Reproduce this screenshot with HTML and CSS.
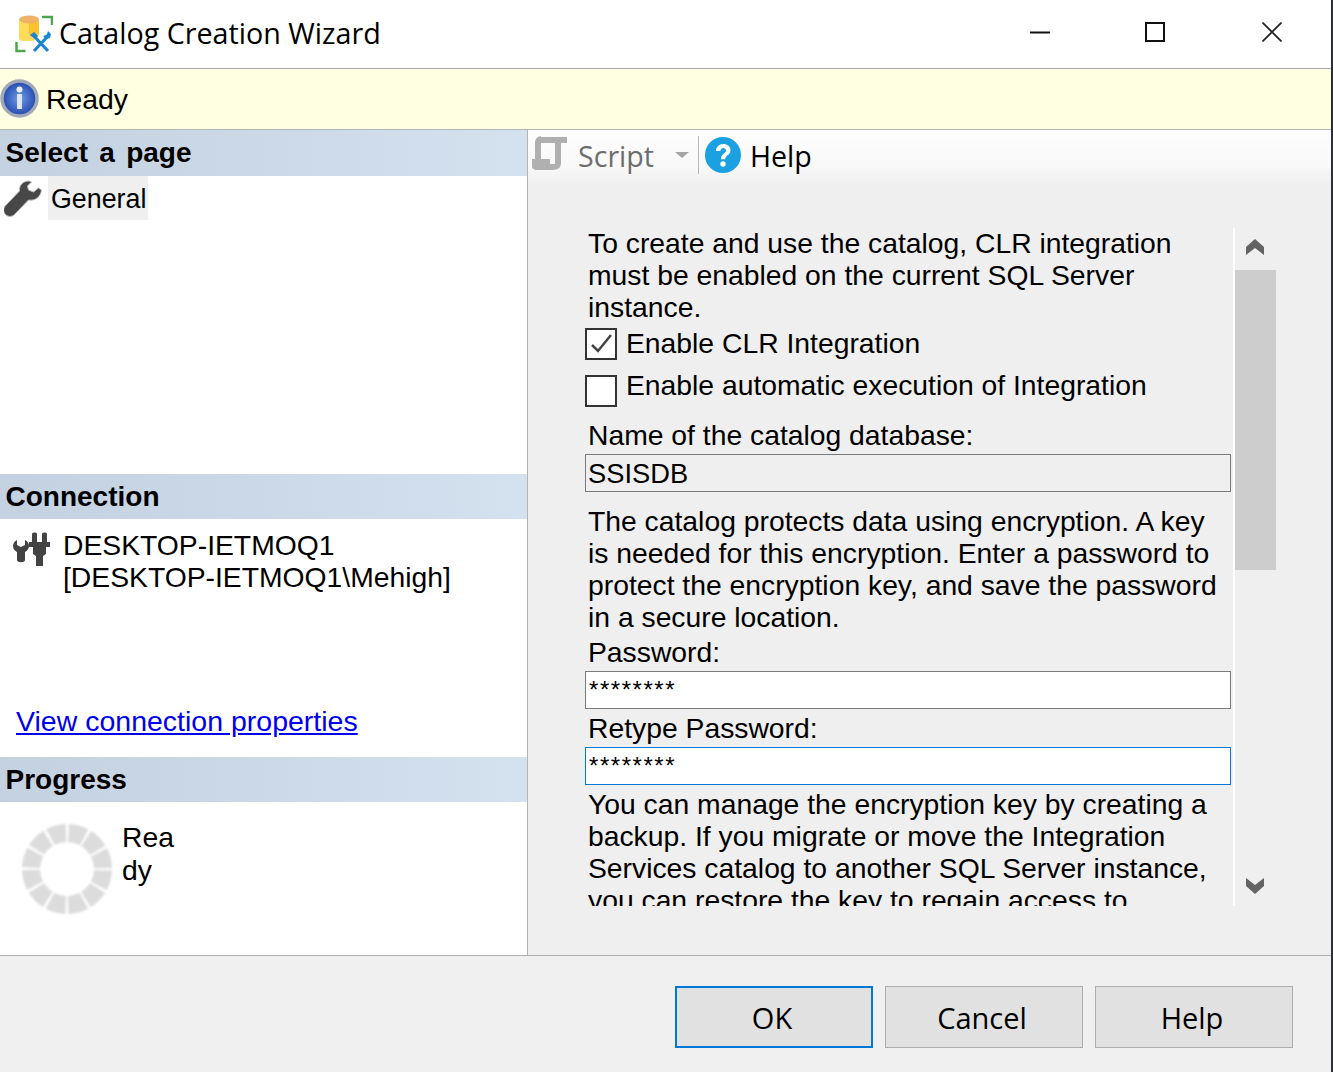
FILE: index.html
```html
<!DOCTYPE html>
<html lang="en">

<head>
    <meta charset="UTF-8">
    <title>Catalog Creation Wizard</title>
    <link rel="stylesheet" href="styles.css">
</head>

<body>
    <div class="wizard">
        <div class="title-bar">
            <svg class="app-icon" width="38" height="38" viewBox="0 0 38 38">
                <path d="M4 4h20v17l-6 5-3 0H8c-2 0-4-1-4-3z" fill="#ffdc5a"/>
                <path d="M14 6h10v13l-7 3-3-2z" fill="#fbc22c"/>
                <ellipse cx="14" cy="4.500" rx="10" ry="4" fill="#efb267"/>
                <path d="M27 2h10v8" fill="none" stroke="#4ca64c" stroke-width="2.500"/>
                <path d="M1.500 27v9h9" fill="none" stroke="#4ca64c" stroke-width="2.500"/>
                <path d="M18 20l15 16M34 20l-15 16" fill="none" stroke="#1e86d0" stroke-width="3.200"/>
                <path d="M15 20l4-3 4 4-3 3zM33 16l3 3-1 4-4 1-3-3 3-1 1-1z" fill="#1e86d0"/>
            </svg>
            <span class="title-text">Catalog Creation Wizard</span>
            <div class="window-controls">
                <svg class="min-btn" width="20" height="20" viewBox="0 0 20 20"><path d="M0 10.500h20" stroke="#111" stroke-width="2"/></svg>
                <svg class="max-btn" width="20" height="20" viewBox="0 0 20 20"><rect x="1" y="1" width="18" height="18" fill="none" stroke="#111" stroke-width="2"/></svg>
                <svg width="20" height="20" viewBox="0 0 20 20"><path d="M.5.500l19 19M19.500.500l-19 19" stroke="#222" stroke-width="1.700"/></svg>
            </div>
        </div>

        <div class="status-bar">
            <svg width="40" height="40" viewBox="0 0 40 40">
                <defs>
                    <radialGradient id="info-fill" cx="50%" cy="50%" r="55%">
                        <stop offset="0" stop-color="#6f9be6"/>
                        <stop offset="1" stop-color="#1b3fa8"/>
                    </radialGradient>
                </defs>
                <circle cx="19.500" cy="19.500" r="17.500" fill="url(#info-fill)" stroke="#a3a8b5" stroke-width="3.500"/>
                <circle cx="19.500" cy="10.500" r="3" fill="#e8edf6"/>
                <rect x="17" y="15" width="5" height="15" fill="#dfe4ee"/>
            </svg>
            <span>Ready</span>
        </div>

        <div class="main">
            <div class="left-panel">
                <div class="section-head first">Select a page</div>
                <div class="page-list">
                    <svg class="wrench" width="38" height="38" viewBox="0 0 38 38">
                        <path d="M25 1c-6 0-10 4-9.500 10L2 25c-3 3-3 6-1 9s7 3 9 1l14.500-15c7 1 12-3 13-10l-3-2-5 4-5-2-1-4 4-4z" fill="#474747" stroke="#bbb" stroke-width="1"/>
                    </svg>
                    <div class="page-item">General</div>
                </div>

                <div class="section-head">Connection</div>
                <div class="connection">
                    <div class="server">
                        <svg width="38" height="36" viewBox="0 0 38 36">
                            <path d="M0 14c0-3 2-5 4-6v5l4 2 4-2V8c2 1 4 3 4 6 0 3-2 5-4 6v8c0 3-8 3-8 0v-8c-2-1-4-3-4-6z" fill="#434343"/>
                            <path d="M19 2c0-2 5-2 5 0v9h-5zM29 2c0-2 5-2 5 0v9h-5zM16 10h21v5h-4v7l-3 2v10h-7V24l-3-2v-7h-4z" fill="#434343"/>
                        </svg>
                        <div class="server-name">DESKTOP-IETMOQ1<br>[DESKTOP-IETMOQ1\Mehigh]</div>
                    </div>
                    <a class="conn-link" href="#">View connection properties</a>
                </div>

                <div class="section-head">Progress</div>
                <div class="progress">
                    <svg class="spinner" width="92" height="92" viewBox="0 0 92 92">
                        <circle cx="46" cy="46" r="36" fill="none" stroke="#dcdcdc" stroke-width="18" stroke-dasharray="16.350 2.500" stroke-dashoffset="-1.250"/>
                    </svg>
                    <div class="progress-text">Ready</div>
                </div>
            </div>

            <div class="right-panel">
                <div class="toolbar">
                    <svg class="script-icon" width="38" height="38" viewBox="0 0 38 38">
                        <path d="M9 4h26M9 3c-2 0-3 2-3 4v19M29 4c-2 0-3 2-3 4v19c0 3-2 4-5 4H5c-2 0-3-2-3-5h16" fill="none" stroke="#b0b0b0" stroke-width="6"/>
                    </svg>
                    <span class="tool-disabled">Script</span>
                    <span class="tool-arrow"></span>
                    <span class="tool-sep"></span>
                    <svg width="36" height="36" viewBox="0 0 36 36">
                        <circle cx="18" cy="18" r="18" fill="#1ba1e2"/>
                        <path d="M11 14c0-4 3-7 7.300-7s7.200 2.500 7.200 6.300c0 5-5.200 4.700-5.200 9h-4.300c0-6 5-5.700 5-8.800 0-1.500-1.200-2.600-2.700-2.600s-2.800 1.100-2.900 3.100z" fill="#fff"/>
                        <circle cx="18" cy="27" r="2.700" fill="#fff"/>
                    </svg>
                    <span class="tool-help">Help</span>
                </div>

                <div class="form-area">
                    <div class="form-scroll">
                        <p class="text intro">To create and use the catalog, CLR integration must be enabled on the current SQL Server instance.</p>
                        <div class="check-row first">
                            <span class="check">
                                <svg width="28" height="28" viewBox="0 0 28 28"><path d="M5 15l6 6L24 5" fill="none" stroke="#444" stroke-width="2.500"/></svg>
                            </span>
                            <span class="check-label">Enable CLR Integration</span>
                        </div>
                        <div class="check-row second">
                            <span class="check"></span>
                            <span class="check-label">Enable automatic execution of Integration</span>
                        </div>
                        <p class="text label-name">Name of the catalog database:</p>
                        <div class="field readonly">SSISDB</div>
                        <p class="text after-name">The catalog protects data using encryption. A key is needed for this encryption. Enter a password to protect the encryption key, and save the password in a secure location.</p>
                        <p class="text label-pass">Password:</p>
                        <div class="field pass">********</div>
                        <p class="text label-pass">Retype Password:</p>
                        <div class="field pass focused">********</div>
                        <p class="text label-pass">You can manage the encryption key by creating a backup. If you migrate or move the Integration Services catalog to another SQL Server instance, you can restore the key to regain access to</p>
                    </div>
                    <div class="scrollbar">
                        <svg class="arrow-up" width="18" height="16" viewBox="0 0 18 16"><path d="M0 8l9-8 9 8v8l-9-7-9 7z" fill="#636363"/></svg>
                        <div class="thumb"></div>
                        <svg class="arrow-down" width="18" height="16" viewBox="0 0 18 16"><path d="M0 0l9 7 9-7v8l-9 8-9-8z" fill="#636363"/></svg>
                    </div>
                </div>
            </div>
        </div>

        <div class="footer">
            <button class="btn default">OK</button>
            <button class="btn">Cancel</button>
            <button class="btn">Help</button>
        </div>
    </div>
</body>

</html>
```

FILE: styles.css
```css
* {
    margin: 0;
    padding: 0;
    box-sizing: border-box;
}

body {
    background: #fff;
    color: #000;
    font-family: "Liberation Sans", Arial, sans-serif;
    font-size: 28.3px;
    overflow: hidden;
}

.wizard {
    display: flex;
    flex-direction: column;
    width: 1333px;
    height: 1072px;
    border-right: 2px solid #2c2f38;
}

.title-bar {
    display: flex;
    align-items: center;
    height: 69px;
    padding-left: 15px;
    border-bottom: 1px solid #a9a9ad;
    background: #fff;
}

.app-icon {
    flex: none;
}

.title-text {
    margin-left: 6px;
    margin-top: -4px;
    font-family: "Open Sans", sans-serif;
    font-size: 28.7px;
}

.window-controls {
    display: flex;
    margin-left: auto;
    margin-right: 49px;
    margin-top: -4px;
}

.min-btn {
    margin-right: 95px;
}

.max-btn {
    margin-right: 97px;
}

.status-bar {
    display: flex;
    align-items: center;
    gap: 6px;
    height: 61px;
    border-bottom: 1px solid #b5b5b5;
    background: #ffffe1;
    font-size: 28.4px;
}

.main {
    display: flex;
    height: 825px;
}

.left-panel {
    width: 528px;
    border-right: 1px solid #b4b4b4;
}

.section-head {
    display: flex;
    align-items: center;
    height: 45px;
    padding-left: 5.5px;
    background: linear-gradient(90deg, #c3d1e0, #d4e1ef);
    font-size: 28px;
    font-weight: bold;
}

.section-head.first {
    height: 46px;
    word-spacing: 3.5px;
}

.page-list {
    display: flex;
    height: 298px;
    padding-left: 4px;
}

.wrench {
    margin-top: 4px;
}

.page-item {
    height: 44px;
    margin-left: 6px;
    padding: 0 2px 0 3px;
    background: #efefef;
    font-size: 26.8px;
    line-height: 46px;
}

.connection {
    height: 238px;
    padding-top: 10px;
}

.server {
    display: flex;
    gap: 12px;
    padding-left: 13px;
    height: 176px;
}

.server svg {
    margin-top: 3px;
}

.server-name {
    line-height: 32px;
}

.conn-link {
    margin-left: 16px;
    color: #0000ee;
    font-size: 28.5px;
}

.progress {
    display: flex;
    height: 153px;
    padding: 21px 0 0 21px;
}

.spinner {
    filter: blur(1px);
}

.progress-text {
    width: 60px;
    margin-left: 9px;
    margin-top: -2px;
    line-height: 33px;
    word-break: break-all;
}

.right-panel {
    display: flex;
    flex: 1;
    flex-direction: column;
    background: #efefef;
}

.toolbar {
    display: flex;
    align-items: center;
    height: 54px;
    padding-left: 4px;
    padding-bottom: 4px;
    background: linear-gradient(180deg, #fdfdfd 0%, #f8f8f8 70%, #efefef 100%);
    font-family: "Open Sans", sans-serif;
    font-size: 28.6px;
}

.script-icon {
    filter: blur(0.5px);
}

.tool-disabled {
    margin-left: 8px;
    color: #6d6d6d;
}

.tool-arrow {
    width: 0;
    height: 0;
    margin-left: 21px;
    border-left: 7px solid transparent;
    border-right: 7px solid transparent;
    border-top: 6px solid #a6a6a6;
}

.tool-sep {
    width: 1px;
    height: 38px;
    margin: 0 6px 0 9px;
    background: #b8b8b8;
}

.tool-help {
    margin-left: 9px;
}

.form-area {
    display: flex;
    height: 678px;
    margin-top: 44px;
    margin-left: 57px;
    width: 691px;
}

.form-scroll {
    width: 650px;
    height: 678px;
    overflow: hidden;
    border-right: 2px solid #fff;
}

.text {
    padding-left: 3px;
    padding-right: 6px;
    line-height: 32px;
}

.intro {
    margin-top: -1px;
}

.check-row {
    display: flex;
    align-items: flex-start;
    gap: 9px;
}

.check-row.first {
    margin-top: 5px;
}

.check-row.second {
    margin-top: 15px;
}

.check {
    display: flex;
    align-items: center;
    justify-content: center;
    width: 32px;
    height: 32px;
    border: 2px solid #333;
    background: #fff;
}

.check-label {
    line-height: 32px;
}

.check-row.first .check-label {
    margin-top: -1px;
}

.check-row.second .check-label {
    margin-top: -6px;
}

.label-name {
    margin-top: 12px;
    margin-bottom: 3px;
}

.field {
    width: 646px;
    height: 38px;
    padding-left: 2px;
    border: 1px solid #7a7a7a;
    font-size: 27.3px;
    line-height: 38px;
}

.field.readonly {
    background: #efefef;
}

.field.pass {
    padding-left: 3px;
    background: #fff;
    font-size: 24px;
    line-height: 35px;
    letter-spacing: 1.550px;
}

.field.focused {
    border-color: #0078d7;
}

.after-name {
    margin-top: 13px;
}

.label-pass {
    margin-top: 3px;
}

.text.label-pass + .field {
    margin-top: 3px;
}

.scrollbar {
    position: relative;
    width: 41px;
    height: 678px;
}

.thumb {
    height: 300px;
    margin-top: 42px;
    background: #cdcdcd;
}

.arrow-up,
.arrow-down {
    position: absolute;
    left: 11px;
}

.arrow-up {
    top: 11px;
}

.arrow-down {
    top: 650px;
}

.footer {
    display: flex;
    justify-content: flex-end;
    gap: 12px;
    height: 117px;
    padding: 30px 38px 0 0;
    border-top: 1px solid #aeaeae;
    background: #f0f0f0;
}

.btn {
    width: 198px;
    height: 62px;
    padding-right: 4px;
    border: 1px solid #adadad;
    background: #e1e1e1;
    color: #000;
    font-family: "Open Sans", sans-serif;
    font-size: 29px;
}

.btn.default {
    border: 2px solid #0078d7;
}
```
